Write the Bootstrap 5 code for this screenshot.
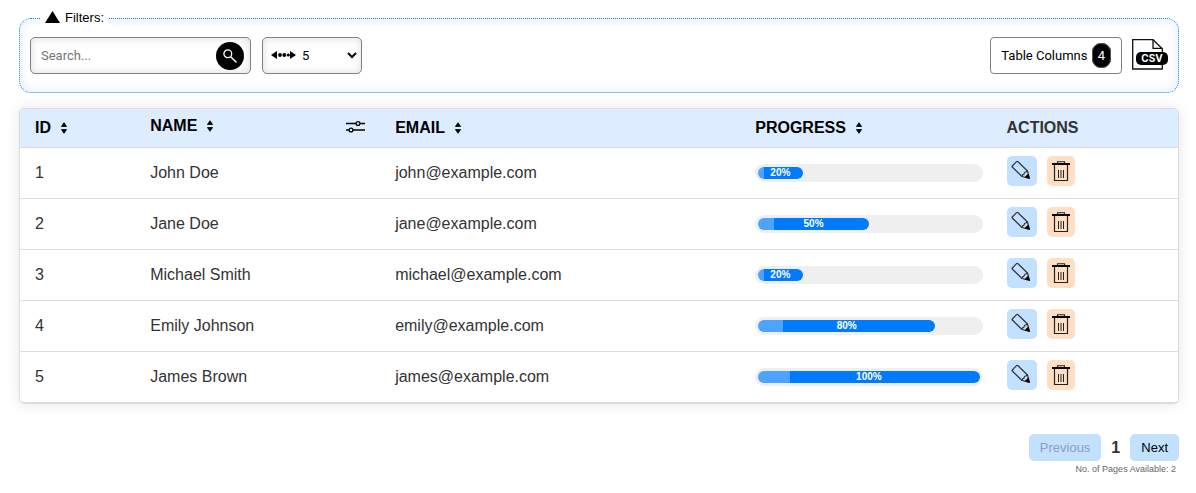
<!DOCTYPE html>
<html lang="en">
<head>
<meta charset="utf-8">
<meta name="viewport" content="width=device-width, initial-scale=1">
<title>Users</title>
<link href="https://cdn.jsdelivr.net/npm/bootstrap@5.3.0/dist/css/bootstrap.min.css" rel="stylesheet">
<style>
  body { font-family: "Liberation Sans", Arial, sans-serif; font-size: 16px; color: #333; background: #fff; }
  .page-wrap { padding: 10px 17px 16px 19px; }
  .control-text { font-family: Roboto, "Liberation Sans", sans-serif; font-size: 13px; }
  .gap-controls { gap: 10px; }
  .gap-fields { gap: 11px; }

  .filter-box { border: 1px dotted #007bff; border-radius: 12px; padding: 11px 10px 18px; margin-bottom: 15px; box-shadow: inset 0 0 12px #e0eeff; }
  .filter-box legend { float: none; display: flex; align-items: center; gap: 5px; width: max-content; margin: 0 0 0 10px; padding: 0 5px; font-size: 13px; line-height: 16px; color: #000; background: #fff; }
  .filter-box legend svg { margin-bottom: 3px; }

  .search-box { width: 221px; height: 37px; padding: 0 6px 0 10px; border: 1px solid #808080; border-radius: 5px; box-shadow: inset 0 0 10px #ddd; }
  .search-box input { width: 100%; min-width: 0; border: 0; outline: 0; padding: 0; background: transparent; }
  .search-box input::placeholder { color: #757575; }
  .search-btn { flex: none; width: 28px; height: 28px; border: 0; border-radius: 50%; background: #000; }
  .size-box { position: relative; width: 100px; height: 37px; }
  .size-box select { appearance: none; width: 100%; height: 100%; padding: 0 20px 0 39px; border: 1px solid #808080; border-radius: 5px; background: #fff; box-shadow: inset 0 0 10px #ddd; color: #000; }
  .size-box svg { position: absolute; pointer-events: none; top: 13px; }
  .size-box .range-mark { left: 9px; }
  .size-box .chevron { right: 5px; }
  .columns-btn { height: 37px; padding: 0 10px; border: 1px solid #808080; border-radius: 4px; background: #fff; color: #000; }
  .count-pill { margin-left: 1px; padding: 4px 5px; border: 1px solid #555; border-radius: 9px; background: #000; color: #fff; line-height: 15px; }
  .csv-btn { border: 0; padding: 0; background: transparent; width: 36px; height: 37px; }

  .table-frame { border: 1px solid #dcdcdc; border-bottom-width: 2px; border-radius: 5px; overflow: hidden; box-shadow: 0 0 14px #0000001a; }
  .user-table { table-layout: fixed; width: 100%; border-collapse: separate; border-spacing: 0; }
  .user-table th { height: 39px; padding: 0 15px; background: #deecff; color: #000; border-bottom: 1px solid #d8dce2; }
  .user-table th.name-head { padding: 0 15px 4px; }
  .user-table th:last-child { color: #333; }
  .user-table td { height: 51px; padding: 0 15px; background: #fff; border-bottom: 1px solid #ddd; }
  .user-table tbody tr:last-child td { height: 50px; border-bottom: 0; }
  .user-table td.bar-cell { padding-right: 9px; }
  .user-table td.act-cell { padding-bottom: 4px; }
  .sort-btn { border: 0; padding: 0; background: transparent; font-weight: 700; color: inherit; line-height: 18px; gap: 9px; }
  .plain-btn { border: 0; padding: 0; background: transparent; line-height: 1; }

  .bar-track { height: 18px; padding: 3px; border-radius: 9px; background: #efefef; }
  .bar-fill { height: 12px; border-radius: 6px; color: #fff; font-size: 10px; font-weight: 700; line-height: 12px; text-align: center; background: linear-gradient(90deg, #4da3ff 14.4%, #007bff 14.4%); }

  .act-btn { height: 30px; padding: 0; border: 0; border-radius: 5px; }
  .act-edit { width: 30px; padding: 0 2px 2px 0; background: #c2e0ff; }
  .act-delete { width: 28px; background: #ffdfc4; }

  .pager { margin-top: 30px; }
  .pager-btn { height: 27px; padding: 0 11px; border: 0; border-radius: 5px; background: #c2e0ff; color: #000; font-size: 13px; }
  .pager-btn:disabled { color: #8ba1b8; }
  .pager-note { font-size: 9px; line-height: 12px; color: #666; padding: 2px 3px 0 0; }
</style>
</head>
<body>
<svg width="0" height="0" class="position-absolute" aria-hidden="true">
  <symbol id="sort" viewBox="0 0 8 12"><path d="M4 0.700 6.600 4.500H1.400ZM4 11.300 1.400 7.500h5.200Z" fill="#000" stroke="#000" stroke-width=".8" stroke-linejoin="round"/></symbol>
  <symbol id="pencil" viewBox="0 0 20 20"><g fill="none" stroke="#333" stroke-width="1.200" stroke-linejoin="round"><path d="M1.300 6 5.500 1.700Q6.200 1 7 1.700L16.500 11 18.500 18.500 11 16.500 1.300 7Q.8 6.500 1.300 6Z"/><path d="M11 16.500Q11.500 14.500 13 14.200Q13.200 12.200 14.500 12Q15.500 11.800 16.500 11"/></g><path d="M13.500 17.200 17.300 13.500 18.800 18.800Z" fill="#000"/></symbol>
  <symbol id="trash" viewBox="0 0 18 21"><path d="M5.500 2.500V.8h7v1.700" fill="none" stroke="#222" stroke-width="1.100"/><path d="M0 3h18" stroke="#000" stroke-width="2"/><path d="M2.500 4v15.500h13V4" fill="none" stroke="#222" stroke-width="1.200"/><path d="M6.500 9v8M9 9v8M11.500 9v8" stroke="#222" stroke-width="1"/></symbol>
</svg>
<main class="page-wrap">
  <fieldset class="filter-box">
    <legend><svg width="15" height="12" viewBox="0 0 15 12" aria-hidden="true"><path d="M7.500 0 15 12H0Z" fill="#000"/></svg>Filters:</legend>
    <div class="d-flex flex-wrap align-items-center justify-content-between control-text">
      <div class="d-flex align-items-center gap-fields">
        <div class="search-box d-flex align-items-center">
          <input type="text" placeholder="Search..." aria-label="Search">
          <button type="button" class="search-btn d-flex align-items-center justify-content-center p-0" aria-label="Run search">
            <svg width="14" height="14" viewBox="0 0 14 14" fill="none" stroke="#fff"><circle cx="4.800" cy="4.800" r="3.900" stroke-width="1.300"/><path d="m7.700 7.700 5.800 5.800" stroke-width="1.400"/></svg>
          </button>
        </div>
        <div class="size-box">
          <select aria-label="Rows per page"><option>5</option><option>10</option><option>20</option></select>
          <svg class="range-mark" width="26" height="10" viewBox="0 0 26 10" aria-hidden="true"><path d="M0 5 6 1V9ZM25 5 19 1V9Z"/><circle cx="9" cy="5" r="1.900"/><circle cx="13.300" cy="5" r="1.900"/><circle cx="17.300" cy="5" r="1.600"/></svg>
          <svg class="chevron" width="10" height="10" viewBox="0 0 10 10" aria-hidden="true"><path d="m1 3 4 4 4-4" fill="none" stroke="#000" stroke-width="2"/></svg>
        </div>
      </div>
      <div class="d-flex align-items-center gap-controls">
        <button type="button" class="columns-btn">Table Columns <span class="count-pill">4</span></button>
        <button type="button" class="csv-btn" aria-label="Export CSV">
          <svg class="d-block" width="36" height="37" viewBox="0 0 36 37"><path d="M.7 2.700H21l9.300 9V32H.7Z" fill="#fff" stroke="#111" stroke-width="1.300"/><path d="M21 2.700v8.600h9.300" fill="none" stroke="#111" stroke-width="1.300"/><rect x="4" y="15" width="32" height="13" rx="5" fill="#000"/><text x="20" y="25" text-anchor="middle" font-family="Inter, sans-serif" font-size="10" font-weight="700" fill="#fff">CSV</text></svg>
        </button>
      </div>
    </div>
  </fieldset>

  <div class="table-frame">
    <table class="user-table">
      <colgroup><col style="width:9.95%"><col style="width:21.15%"><col style="width:31.1%"><col style="width:21.7%"><col></colgroup>
      <thead>
        <tr>
          <th scope="col"><button type="button" class="sort-btn d-flex align-items-center">ID <svg width="8" height="12"><use href="#sort"/></svg></button></th>
          <th scope="col" class="name-head"><div class="d-flex align-items-center justify-content-between">
            <button type="button" class="sort-btn d-flex align-items-center">NAME <svg width="8" height="12"><use href="#sort"/></svg></button>
            <button type="button" class="plain-btn" aria-label="Filter by name"><svg class="d-block" width="20" height="13" viewBox="0 0 20 13" fill="none" stroke="#000" stroke-width="1.300"><path d="M1 3.500h10M15 3.500h5M1 10h3M8 10h12"/><circle cx="13" cy="3.500" r="1.900"/><circle cx="6" cy="10" r="1.900"/></svg></button>
          </div></th>
          <th scope="col"><button type="button" class="sort-btn d-flex align-items-center">EMAIL <svg width="8" height="12"><use href="#sort"/></svg></button></th>
          <th scope="col"><button type="button" class="sort-btn d-flex align-items-center">PROGRESS <svg width="8" height="12"><use href="#sort"/></svg></button></th>
          <th scope="col">ACTIONS</th>
        </tr>
      </thead>
      <tbody id="rows"></tbody>
    </table>
  </div>

  <nav class="pager d-flex flex-column align-items-end" aria-label="Pages">
    <div class="d-flex align-items-center gap-controls">
      <button type="button" class="pager-btn" disabled>Previous</button>
      <strong>1</strong>
      <button type="button" class="pager-btn">Next</button>
    </div>
    <div class="pager-note">No. of Pages Available: 2</div>
  </nav>
</main>
<script src="https://cdn.jsdelivr.net/npm/bootstrap@5.3.0/dist/js/bootstrap.bundle.min.js"></script>
<script>
  const users = [
    [1, "John Doe", "john@example.com", 20],
    [2, "Jane Doe", "jane@example.com", 50],
    [3, "Michael Smith", "michael@example.com", 20],
    [4, "Emily Johnson", "emily@example.com", 80],
    [5, "James Brown", "james@example.com", 100]
  ];
  document.getElementById("rows").innerHTML = users.map(([id, name, email, pct]) => `
    <tr>
      <td>${id}</td><td>${name}</td><td>${email}</td>
      <td class="bar-cell"><div class="bar-track"><div class="bar-fill" role="progressbar" aria-label="${name}" aria-valuenow="${pct}" aria-valuemin="0" aria-valuemax="100" style="width:${pct}%">${pct}%</div></div></td>
      <td class="act-cell"><div class="d-flex align-items-center gap-controls">
        <button type="button" class="act-btn act-edit d-flex align-items-center justify-content-center" aria-label="Edit ${name}"><svg width="20" height="20"><use href="#pencil"/></svg></button>
        <button type="button" class="act-btn act-delete d-flex align-items-center justify-content-center" aria-label="Delete ${name}"><svg width="18" height="21"><use href="#trash"/></svg></button>
      </div></td>
    </tr>`).join("");
</script>
</body>
</html>
